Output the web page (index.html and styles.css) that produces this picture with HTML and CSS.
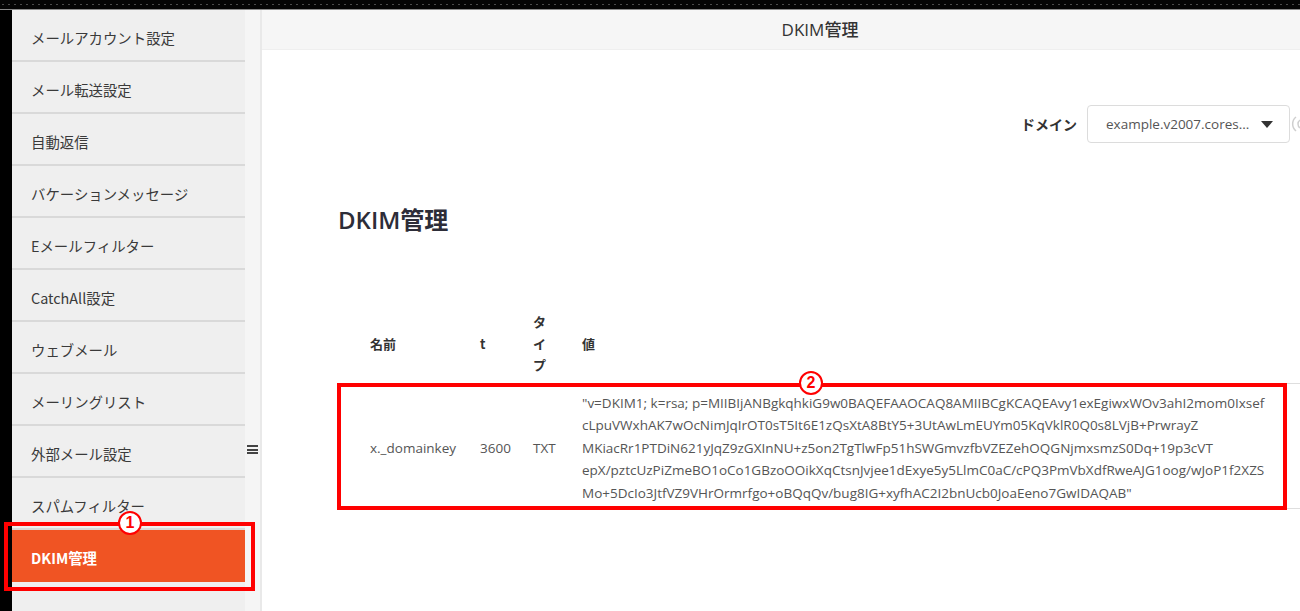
FILE: index.html
```html
<!DOCTYPE html>
<html lang="ja">
<head>
<meta charset="utf-8">
<title>DKIM管理</title>
<link rel="stylesheet" href="styles.css">
</head>
<body>
<div class="topstrip"></div>
<div class="app">
  <nav class="sidebar">
    <div class="nav-item">メールアカウント設定</div>
    <div class="nav-item">メール転送設定</div>
    <div class="nav-item">自動返信</div>
    <div class="nav-item">バケーションメッセージ</div>
    <div class="nav-item">Eメールフィルター</div>
    <div class="nav-item">CatchAll設定</div>
    <div class="nav-item">ウェブメール</div>
    <div class="nav-item">メーリングリスト</div>
    <div class="nav-item">外部メール設定</div>
    <div class="nav-item">スパムフィルター</div>
    <div class="nav-item active">DKIM管理</div>
  </nav>
  <div class="gutter">
    <div class="hamburger"><span></span><span></span><span></span></div>
  </div>
  <main class="main">
    <header class="topbar">DKIM管理</header>
    <div class="content">
      <div class="domain-row">
        <span class="domain-label">ドメイン</span>
        <div class="select">
          <span class="select-text">example.v2007.cores...</span>
          <span class="caret"></span>
        </div>
        <span class="side-icon">
          <svg width="12" height="20" viewBox="0 0 12 20"><path d="M6 3 A9 9 0 0 0 6 17" fill="none" stroke="#cfcfcf" stroke-width="1.5"/><path d="M10 6 A5 5 0 0 0 10 14" fill="none" stroke="#cfcfcf" stroke-width="1.5"/></svg>
        </span>
      </div>
      <h1 class="page-title">DKIM管理</h1>
      <table class="dkim-table">
        <colgroup>
          <col class="c-name"><col class="c-ttl"><col class="c-type"><col class="c-value">
        </colgroup>
        <thead>
          <tr><th class="first">名前</th><th>t</th><th class="type">タイプ</th><th>値</th></tr>
        </thead>
        <tbody>
          <tr>
            <td class="first">x._domainkey</td>
            <td>3600</td>
            <td class="type">TXT</td>
            <td class="value">"v=DKIM1; k=rsa; p=MIIBIjANBgkqhkiG9w0BAQEFAAOCAQ8AMIIBCgKCAQEAvy1exEgiwxWOv3ahI2mom0Ixsef<br>cLpuVWxhAK7wOcNimJqIrOT0sT5It6E1zQsXtA8BtY5+3UtAwLmEUYm05KqVklR0Q0s8LVjB+PrwrayZ<br>MKiacRr1PTDiN621yJqZ9zGXInNU+z5on2TgTlwFp51hSWGmvzfbVZEZehOQGNjmxsmzS0Dq+19p3cVT<br>epX/pztcUzPiZmeBO1oCo1GBzoOOikXqCtsnJvjee1dExye5y5LlmC0aC/cPQ3PmVbXdfRweAJG1oog/wJoP1f2XZS<br>Mo+5DcIo3JtfVZ9VHrOrmrfgo+oBQqQv/bug8IG+xyfhAC2I2bnUcb0JoaEeno7GwIDAQAB"</td>
          </tr>
        </tbody>
      </table>
    </div>
  </main>
</div>
<div class="mark mark-1"></div>
<div class="num num-1">1</div>
<div class="mark mark-2"></div>
<div class="num num-2">2</div>
</body>
</html>
```

FILE: styles.css
```css
html, body {
  margin: 0;
  padding: 0;
  overflow: hidden;
}
body {
  background: #000;
  width: 1300px;
  height: 611px;
  position: relative;
  font-family: "Open Sans", "Noto Sans CJK JP", sans-serif;
  color: #333;
}
.topstrip {
  height: 9px;
  background-color: #050505;
  background-image: radial-gradient(circle, #4a4a4a 0.6px, transparent 0.9px);
  background-size: 6px 9px;
  border-bottom: 1px solid #8a8a8a;
}
.app {
  display: flex;
  margin-left: 12px;
  width: 1366px;
  height: 601px;
}
.sidebar {
  width: 233px;
  flex: none;
  background: #efefef;
  font-family: "Noto Sans CJK JP", sans-serif;
}
.nav-item {
  height: 44px;
  line-height: 44px;
  padding-top: 6px;
  padding-left: 19px;
  border-bottom: 2px solid #d9d9d9;
  font-size: 14.4px;
  color: #3a3a3a;
  white-space: nowrap;
}
.nav-item.active {
  background: #f05423;
  color: #fff;
  font-weight: 700;
  border-bottom-color: #f05423;
}
.gutter {
  width: 15px;
  flex: none;
  background: #f5f5f5;
  border-right: 2px solid #e9e9e9;
  position: relative;
}
.hamburger {
  position: absolute;
  left: 2px;
  top: 435px;
  width: 11px;
  display: flex;
  flex-direction: column;
  gap: 1.5px;
}
.hamburger span {
  display: block;
  height: 2px;
  background: #444;
}
.main {
  flex: 1;
  background: #fff;
  display: flex;
  flex-direction: column;
}
.topbar {
  height: 39px;
  line-height: 39px;
  background: #f6f6f6;
  border-bottom: 1px solid #efefef;
  text-align: center;
  font-size: 17px;
  color: #333;
  font-weight: 500;
}
.content {
  padding: 0 76px;
}
.domain-row {
  margin-top: 55px;
  display: flex;
  justify-content: flex-end;
  align-items: center;
  gap: 10px;
}
.domain-label {
  font-size: 14px;
  font-weight: 700;
  color: #333;
  font-family: "Noto Sans CJK JP", sans-serif;
}
.select {
  width: 203px;
  height: 38px;
  box-sizing: border-box;
  border: 1px solid #dcdcdc;
  border-radius: 4px;
  display: flex;
  align-items: center;
  justify-content: space-between;
  padding: 0 16px 0 18px;
  background: #fff;
}
.select-text {
  font-size: 13.5px;
  color: #555;
}
.caret {
  width: 0;
  height: 0;
  border-left: 6px solid transparent;
  border-right: 6px solid transparent;
  border-top: 7px solid #333;
}
.side-icon {
  width: 12px;
  margin-left: -10px;
  display: flex;
}
.page-title {
  margin: 61px 0 0;
  font-size: 24px;
  line-height: 32px;
  font-weight: 600;
  color: #2d2d38;
}
.dkim-table {
  margin-top: 68px;
  width: 964px;
  table-layout: fixed;
  border-collapse: collapse;
  font-size: 13.5px;
}
.c-name { width: 132px; }
.c-ttl { width: 53px; }
.c-type { width: 49px; }
.c-value { width: 730px; }
.dkim-table th {
  text-align: left;
  font-weight: 700;
  font-size: 13px;
  color: #333;
  padding: 7px 10px;
  line-height: 21.5px;
  font-family: "Noto Sans CJK JP", sans-serif;
  vertical-align: middle;
}
.dkim-table thead tr {
  border-bottom: 1px solid #dedede;
}
.dkim-table tbody tr {
  border-bottom: 1px solid #dedede;
}
.dkim-table td {
  padding: 8px 10px 4px;
  line-height: 22.5px;
  color: #555;
  vertical-align: middle;
  white-space: nowrap;
}
.dkim-table .first {
  padding-left: 32px;
}
.dkim-table .type {
  padding-right: 15px;
}
.dkim-table td.value {
  color: #555;
}
.mark {
  position: absolute;
  border: 4px solid #ff0000;
  box-sizing: border-box;
}
.mark-1 {
  left: 4px;
  top: 522px;
  width: 251px;
  height: 69px;
}
.mark-2 {
  left: 337px;
  top: 383px;
  width: 950px;
  height: 127px;
}
.num {
  position: absolute;
  width: 24px;
  height: 24px;
  box-sizing: border-box;
  border: 2.5px solid #ff0000;
  border-radius: 50%;
  background: #fff;
  color: #ff0000;
  font-family: "Liberation Sans", sans-serif;
  font-weight: 700;
  font-size: 16px;
  line-height: 19px;
  text-align: center;
}
.num-1 {
  left: 118px;
  top: 511px;
}
.num-2 {
  left: 799px;
  top: 371px;
}
```
